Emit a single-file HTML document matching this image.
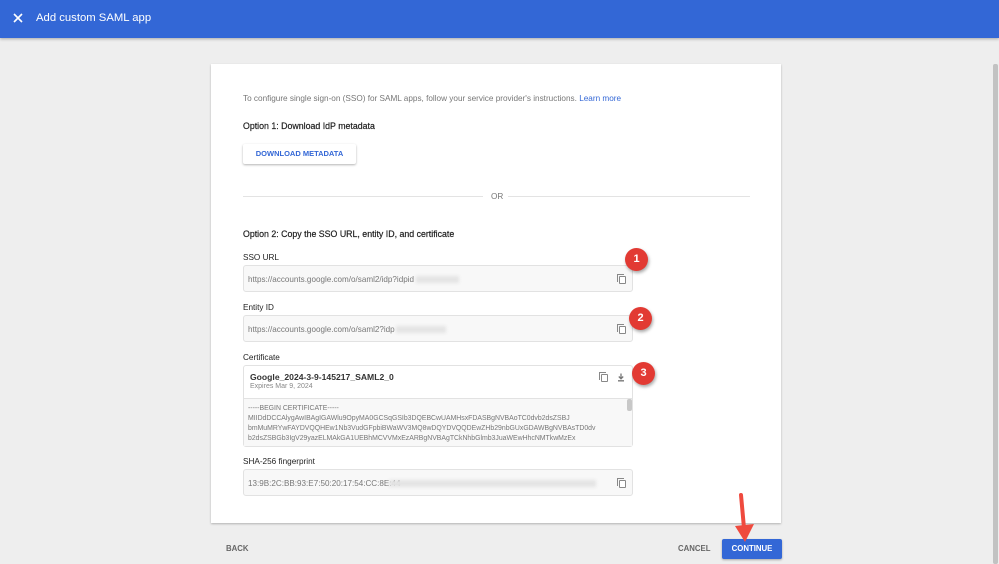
<!DOCTYPE html>
<html><head><meta charset="utf-8"><style>
*{box-sizing:border-box;margin:0;padding:0}
body{width:999px;height:564px;overflow:hidden;background:#eeeeee;font-family:"Liberation Sans",Arial,sans-serif;position:relative;color:#333}
.a{position:absolute}
#hdr{left:0;top:0;width:999px;height:38px;background:#3367d6;box-shadow:0 1px 3px rgba(0,0,0,.3)}
#card{left:211px;top:64px;width:570px;height:459px;background:#fff;box-shadow:0 1px 2px rgba(0,0,0,.25)}
.t{font-size:8.2px;color:#777}
.h{font-size:8.8px;color:#222;-webkit-text-stroke:0.2px #222}
.lbl{font-size:8.2px;color:#222}
.box{background:#f8f8f8;border:1px solid #e2e2e2;border-radius:3px}
.v{font-size:8.1px;color:#777}
.blur{background:#e4e4e4;filter:blur(1.5px);height:7px}
.badge{width:23px;height:23px;border-radius:50%;background:#e23a33;color:#fff;font-weight:bold;font-size:11px;text-align:center;line-height:23px;box-shadow:1px 2px 3px rgba(0,0,0,.35)}
.cp{width:7px;height:8px;border:1.2px solid #888;border-radius:1px;background:#fff}
.cp:before{content:"";position:absolute;left:-3px;top:-3px;width:6px;height:7px;border-left:1.2px solid #888;border-top:1.2px solid #888}
.cert{font-size:6.9px;color:#777;line-height:10px}
</style></head><body>
<div id="hdr" class="a">
 <svg class="a" style="left:13px;top:13px" width="10" height="10"><path d="M1 1L9 9M9 1L1 9" stroke="#fff" stroke-width="1.6"/></svg>
 <div class="a" style="left:36px;top:12px;font-size:11.3px;color:#fff">Add custom SAML app</div>
</div>
<div class="a" style="left:993px;top:64px;width:5px;height:500px;background:#c2c2c2;border-radius:2px"></div>
<div id="card" class="a"></div>
<div class="a t" style="left:243px;top:94px">To configure single sign-on (SSO) for SAML apps, follow your service provider's instructions. <span style="color:#3367d6">Learn more</span></div>
<div class="a h" style="left:243px;top:121px">Option 1: Download IdP metadata</div>
<div class="a" style="left:243px;top:144px;width:113px;height:20px;background:#fff;border-radius:2px;box-shadow:0 1px 2px rgba(0,0,0,.3);font-size:7.5px;font-weight:bold;color:#3367d6;text-align:center;line-height:20px">DOWNLOAD METADATA</div>
<div class="a" style="left:243px;top:196px;width:240px;height:1px;background:#e3e3e3"></div>
<div class="a" style="left:508px;top:196px;width:242px;height:1px;background:#e3e3e3"></div>
<div class="a t" style="left:491px;top:192px">OR</div>
<div class="a h" style="left:243px;top:229px">Option 2: Copy the SSO URL, entity ID, and certificate</div>

<div class="a lbl" style="left:243px;top:253px">SSO URL</div>
<div class="a box" style="left:243px;top:265px;width:390px;height:27px"></div>
<div class="a v" style="left:248px;top:275px">https://accounts.google.com/o/saml2/idp?idpid</div>
<div class="a blur" style="left:416px;top:276px;width:43px"></div>
<div class="a cp" style="left:619px;top:276px"></div>

<div class="a lbl" style="left:243px;top:303px">Entity ID</div>
<div class="a box" style="left:243px;top:315px;width:390px;height:27px"></div>
<div class="a v" style="left:248px;top:325px">https://accounts.google.com/o/saml2?idp</div>
<div class="a blur" style="left:396px;top:326px;width:50px"></div>
<div class="a cp" style="left:619px;top:326px"></div>

<div class="a lbl" style="left:243px;top:353px">Certificate</div>
<div class="a" style="left:243px;top:365px;width:390px;height:82px;border:1px solid #e2e2e2;border-radius:3px;background:#fff"></div>
<div class="a" style="left:250px;top:372px;font-size:8.6px;font-weight:bold;color:#333">Google_2024-3-9-145217_SAML2_0</div>
<div class="a" style="left:250px;top:383px;font-size:7px;color:#888">Expires Mar 9, 2024</div>
<div class="a cp" style="left:601px;top:374px"></div>
<svg class="a" style="left:617px;top:373px" width="8" height="9"><path d="M4 0.5V5.5M1.8 3.5L4 5.8L6.2 3.5M1 7.8H7" stroke="#777" stroke-width="1.3" fill="none"/></svg>
<div class="a" style="left:244px;top:398px;width:388px;height:48px;background:#f8f8f8;border-top:1px solid #e2e2e2"></div>
<div class="a" style="left:627px;top:399px;width:5px;height:12px;background:#c8c8c8;border-radius:2px"></div>
<div class="a cert" style="left:248px;top:404px">-----BEGIN CERTIFICATE-----<br>MIIDdDCCAlygAwIBAgIGAWlu9OpyMA0GCSqGSIb3DQEBCwUAMHsxFDASBgNVBAoTC0dvb2dsZSBJ<br>bmMuMRYwFAYDVQQHEw1Nb3VudGFpbiBWaWV3MQ8wDQYDVQQDEwZHb29nbGUxGDAWBgNVBAsTD0dv<br>b2dsZSBGb3IgV29yazELMAkGA1UEBhMCVVMxEzARBgNVBAgTCkNhbGlmb3JuaWEwHhcNMTkwMzEx</div>

<div class="a lbl" style="left:243px;top:457px">SHA-256 fingerprint</div>
<div class="a box" style="left:243px;top:469px;width:390px;height:27px"></div>
<div class="a v" style="left:248px;top:479px">13:9B:2C:BB:93:E7:50:20:17:54:CC:8E:44</div>
<div class="a blur" style="left:389px;top:480px;width:207px"></div>
<div class="a cp" style="left:619px;top:480px"></div>

<div class="a badge" style="left:625px;top:248px">1</div>
<div class="a badge" style="left:629px;top:307px">2</div>
<div class="a badge" style="left:632px;top:362px">3</div>

<div class="a" style="left:226px;top:544px;font-size:7.8px;font-weight:bold;color:#666">BACK</div>
<div class="a" style="left:678px;top:544px;font-size:7.8px;font-weight:bold;color:#666">CANCEL</div>
<div class="a" style="left:722px;top:539px;width:60px;height:20px;background:#3367d6;border-radius:2px;box-shadow:0 1px 2px rgba(0,0,0,.3);color:#fff;font-size:7.8px;font-weight:bold;text-align:center;line-height:20px">CONTINUE</div>
<svg class="a" style="left:730px;top:490px" width="30" height="60"><path d="M11 5L14 38" stroke="#ef4a3e" stroke-width="4" stroke-linecap="round"/><path d="M5 36L24 34L15 52Z" fill="#ef4a3e"/></svg>
</body></html>
